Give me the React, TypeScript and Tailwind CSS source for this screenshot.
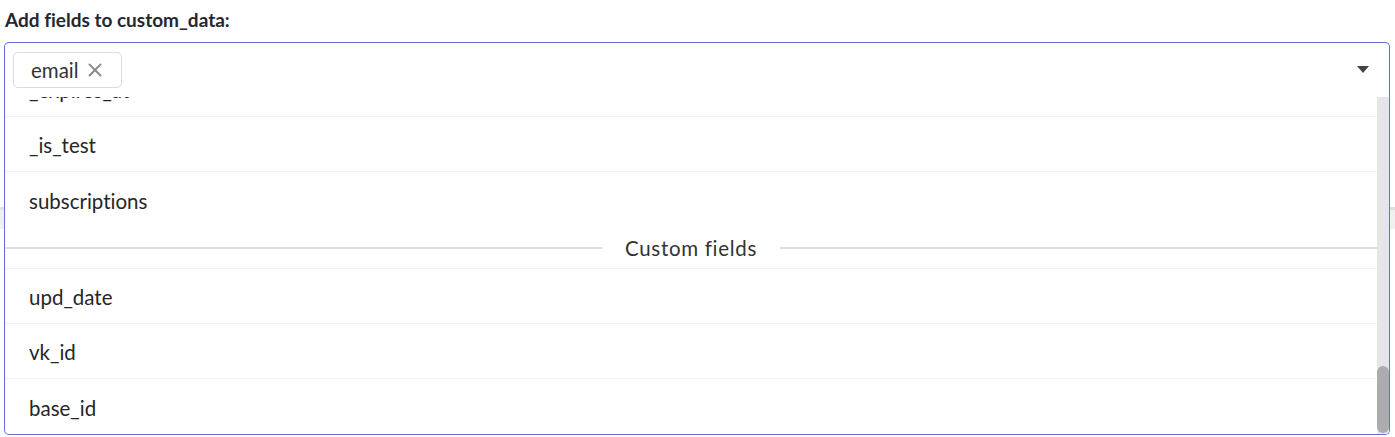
import React from 'react';
import { X } from 'lucide-react';

const groups = [
  { label: null, items: ['_expires_at', '_is_test', 'subscriptions'] },
  { label: 'Custom fields', items: ['upd_date', 'vk_id', 'base_id'] },
];

export default function App() {
  return (
    <div className="relative h-[437px] w-[1395px] overflow-hidden bg-white font-['Lato',sans-serif] text-[#262730] [font-variant-ligatures:none]">
      <div className="px-[5px] pt-[8px] text-[19px] font-bold leading-[24px]">Add fields to custom_data:</div>

      {/* page content that sits behind the open menu */}
      <div className="mt-[175px] h-[22px] border-t-[3px] border-[#e0e0e0] bg-[#f0f0f0]" />

      <div className="absolute left-[4px] top-[42px] w-[1386px]">
        {/* control */}
        <div className="flex h-[55px] items-center justify-between rounded-t-[5px] border border-b-0 border-[#6272d9] bg-white pl-[8px] pr-[20px]">
          <div className="flex h-[36px] items-center gap-[5px] rounded-[5px] border border-[#dcdcdc] pl-[17px] pr-[15px]">
            <span className="text-[20.5px] leading-none text-[#333]">email</span>
            <X size={22} strokeWidth={2.1} className="text-[#8a8a8a]" />
          </div>
          <svg width="12" height="7" viewBox="0 0 12 7" className="-mt-[2px]">
            <path d="M0 0h12L6 7z" fill="#444" />
          </svg>
        </div>

        {/* menu */}
        <div className="flex h-[338px] overflow-hidden rounded-b-[5px] border border-t-0 border-[#6272d9] bg-white">
          <div className="flex-1 overflow-hidden">
            <div className="-mt-[35px]">
              {groups.map((g, gi) => (
                <div key={gi}>
                  {g.label && (
                    <div className="flex h-[42px] items-center border-b border-[#f2f2f2] pt-[1px]">
                      <div className="h-[2px] flex-1 bg-[#dedede]" />
                      <span className="px-[23px] text-[20.5px] tracking-[0.7px] text-[#333]">{g.label}</span>
                      <div className="h-[2px] flex-1 bg-[#dedede]" />
                    </div>
                  )}
                  {g.items.map((it, i) => (
                    <div
                      key={it}
                      className={
                        'flex h-[55px] items-center pl-[24px] pt-[3px] text-[20.5px] text-[#262626] ' +
                        (i < g.items.length - 1 ? 'border-b border-[#f2f2f2]' : '')
                      }
                    >
                      {it}
                    </div>
                  ))}
                </div>
              ))}
            </div>
          </div>
          <div className="flex w-[12px] flex-col justify-end bg-[#e6e6e6] pb-[1px]">
            <div className="h-[67px] rounded-[6px] bg-[#acacac]" />
          </div>
        </div>
      </div>
    </div>
  );
}
